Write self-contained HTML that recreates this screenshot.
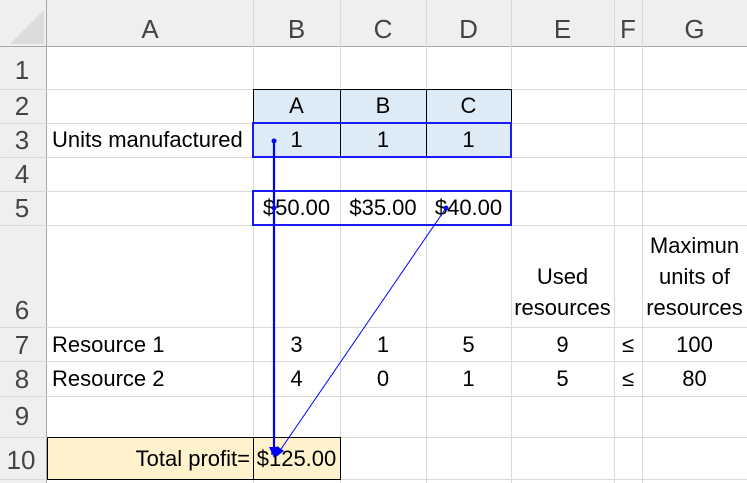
<!DOCTYPE html>
<html><head><meta charset="utf-8"><style>
body{margin:0;width:747px;height:483px;overflow:hidden;background:#fff;font-family:"Liberation Sans",sans-serif;position:relative}
div{position:absolute;box-sizing:border-box}
.h{background:#efefef}
.vl{width:1px;background:#d9d9d9}
.hl{height:1px;background:#d9d9d9}
.ch{top:0;height:47px;font-size:26px;color:#444;text-align:center;line-height:58px}
.rh{left:0;width:44px;font-size:26px;color:#444;text-align:center;line-height:1}
.t{font-size:22px;color:#000;white-space:nowrap;line-height:34px}
.c{text-align:center}
</style></head><body>
<div class="h" style="left:0;top:0;width:747px;height:47px"></div>
<div class="h" style="left:0;top:0;width:47px;height:483px"></div>
<div style="left:10px;top:10px;width:0;height:0;border-left:34px solid transparent;border-bottom:34px solid #dcdcdc"></div>
<div style="left:0;top:46px;width:747px;height:1px;background:#a8a8a8"></div>
<div style="left:46px;top:0;width:1px;height:483px;background:#a8a8a8"></div>
<div style="left:253px;top:89px;width:258px;height:68px;background:#ddebf7"></div>
<div style="left:47px;top:437px;width:293px;height:42px;background:#fff2cc"></div>
<div class="vl" style="left:253px;top:0;height:483px"></div>
<div class="vl" style="left:340px;top:0;height:483px"></div>
<div class="vl" style="left:426px;top:0;height:483px"></div>
<div class="vl" style="left:511px;top:0;height:483px"></div>
<div class="vl" style="left:614px;top:0;height:483px"></div>
<div class="vl" style="left:642px;top:0;height:483px"></div>
<div class="hl" style="left:0;top:89px;width:747px"></div>
<div class="hl" style="left:0;top:123px;width:747px"></div>
<div class="hl" style="left:0;top:157px;width:747px"></div>
<div class="hl" style="left:0;top:191px;width:747px"></div>
<div class="hl" style="left:0;top:225px;width:747px"></div>
<div class="hl" style="left:0;top:327px;width:747px"></div>
<div class="hl" style="left:0;top:361px;width:747px"></div>
<div class="hl" style="left:0;top:396px;width:747px"></div>
<div class="hl" style="left:0;top:437px;width:747px"></div>
<div class="hl" style="left:0;top:479px;width:747px"></div>
<div class="ch" style="left:47px;width:206px">A</div>
<div class="ch" style="left:253px;width:87px">B</div>
<div class="ch" style="left:340px;width:86px">C</div>
<div class="ch" style="left:426px;width:85px">D</div>
<div class="ch" style="left:511px;width:103px">E</div>
<div class="ch" style="left:614px;width:28px">F</div>
<div class="ch" style="left:642px;width:105px">G</div>
<div class="rh" style="top:57px">1</div>
<div class="rh" style="top:93px">2</div>
<div class="rh" style="top:127px">3</div>
<div class="rh" style="top:161px">4</div>
<div class="rh" style="top:195px">5</div>
<div class="rh" style="top:297px">6</div>
<div class="rh" style="top:332px">7</div>
<div class="rh" style="top:366px">8</div>
<div class="rh" style="top:403px">9</div>
<div class="rh" style="top:447px;left:-4px;width:50px">10</div>
<div style="left:253px;top:89px;width:259px;height:69px;border:1px solid #000"></div>
<div style="left:340px;top:89px;width:1px;height:68px;background:#000"></div>
<div style="left:426px;top:89px;width:1px;height:68px;background:#000"></div>
<div style="left:47px;top:437px;width:294px;height:43px;border:1px solid #000"></div>
<div style="left:253px;top:437px;width:1px;height:42px;background:#000"></div>
<div style="left:252px;top:122px;width:260px;height:36px;border:2px solid #1a1aff"></div>
<div style="left:252px;top:190px;width:260px;height:36px;border:2px solid #1a1aff"></div>
<div class="t c" style="left:253px;top:89px;width:87px">A</div>
<div class="t c" style="left:340px;top:89px;width:86px">B</div>
<div class="t c" style="left:426px;top:89px;width:85px">C</div>
<div class="t" style="left:52px;top:123px">Units manufactured</div>
<div class="t c" style="left:253px;top:123px;width:87px">1</div>
<div class="t c" style="left:340px;top:123px;width:86px">1</div>
<div class="t c" style="left:426px;top:123px;width:85px">1</div>
<div class="t c" style="left:253px;top:191px;width:87px">$50.00</div>
<div class="t c" style="left:340px;top:191px;width:86px">$35.00</div>
<div class="t c" style="left:426px;top:191px;width:85px">$40.00</div>
<div class="t c" style="left:511px;top:261px;width:103px;line-height:31px">Used<br>resources</div>
<div class="t c" style="left:642px;top:230px;width:105px;line-height:31px">Maximun<br>units of<br>resources</div>
<div class="t" style="left:52px;top:328px">Resource 1</div>
<div class="t" style="left:52px;top:362px">Resource 2</div>
<div class="t c" style="left:253px;top:328px;width:87px">3</div>
<div class="t c" style="left:340px;top:328px;width:86px">1</div>
<div class="t c" style="left:426px;top:328px;width:85px">5</div>
<div class="t c" style="left:511px;top:328px;width:103px">9</div>
<div class="t c" style="left:614px;top:328px;width:28px">≤</div>
<div class="t c" style="left:642px;top:328px;width:105px">100</div>
<div class="t c" style="left:253px;top:362px;width:87px">4</div>
<div class="t c" style="left:340px;top:362px;width:86px">0</div>
<div class="t c" style="left:426px;top:362px;width:85px">1</div>
<div class="t c" style="left:511px;top:362px;width:103px">5</div>
<div class="t c" style="left:614px;top:362px;width:28px">≤</div>
<div class="t c" style="left:642px;top:362px;width:105px">80</div>
<div class="t" style="left:47px;top:442px;width:203px;text-align:right">Total profit=</div>
<div class="t c" style="left:253px;top:442px;width:87px">$125.00</div>
<svg style="position:absolute;left:0;top:0" width="747" height="483">
<line x1="274" y1="141" x2="274" y2="450" stroke="#0000ff" stroke-width="2.2"/>
<circle cx="274" cy="141" r="2.5" fill="#0000ff"/>
<circle cx="274" cy="208" r="2.5" fill="#0000ff"/>
<polygon points="274,458 269,447 279,447" fill="#0000ff"/>
<line x1="446" y1="208" x2="279" y2="452" stroke="#0000ff" stroke-width="1"/>
<circle cx="446" cy="208" r="2.5" fill="#0000ff"/>
<polygon points="276,457 277,446 284,451" fill="#0000ff"/>
</svg>
</body></html>
